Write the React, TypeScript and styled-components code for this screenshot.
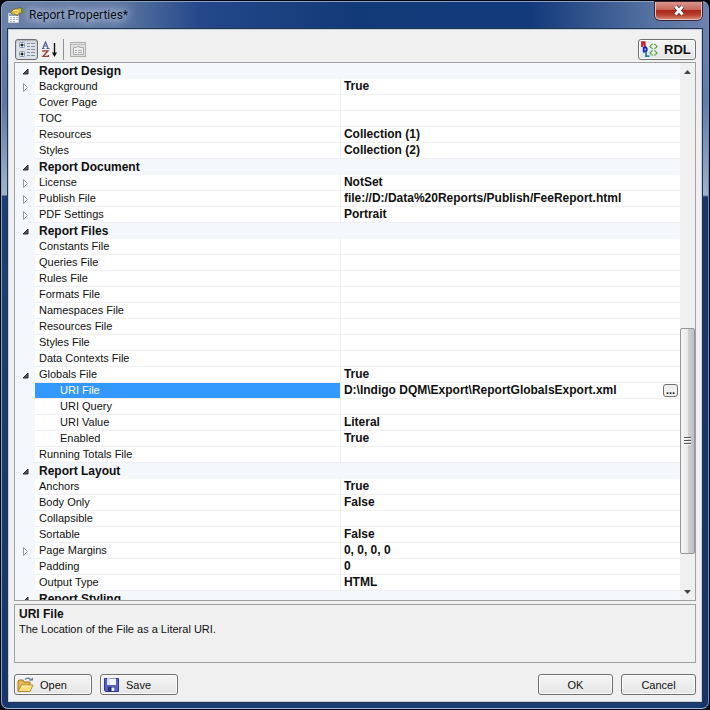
import React from "react";
import styled, { createGlobalStyle, css } from "styled-components";

const Global = createGlobalStyle`
  *, *::before, *::after { box-sizing: border-box; }
  html, body, #root { height: 100%; }
  body {
    margin: 0;
    background: #05070f;
    color: #101010;
    font: 11px/16px "Liberation Sans", Arial, sans-serif;
    overflow: hidden;
  }
  #root {
    display: flex;
    padding: 1px;
  }
`;

const Window = styled.main`
  flex: 1;
  min-width: 0;
  display: flex;
  flex-direction: column;
  padding: 0 6px 6px;
  border: 1px solid #9fb6d6;
  border-color: #8ba0c0 #6d8ab4 #a4b8d4 #8ba0c0;
  border-radius: 7px;
  background:
    linear-gradient(90deg, #6b80a6, #5f78a2 16%, #24488a 28%, #133a78 50%, #133a7b 75%, #5572a0 92%, #6b83ad) top / 100% 28px no-repeat,
    linear-gradient(#6b80a6, #5c77a4 100px, #a5b4cb 193px, #1d3f75 194px, #17376c) left / 7px 100% no-repeat,
    linear-gradient(#6b83ad, #5f7cab 100px, #a0b2cc 193px, #17376c 195px, #14346a) right / 7px 100% no-repeat,
    #1a3d74;
`;

const TitleBar = styled.header`
  flex: none;
  height: 27px;
  display: flex;
  align-items: flex-start;
  gap: 5px;
`;

const TitleIcon = styled.svg`
  width: 16px;
  height: 16px;
  margin-top: 5px;
`;

const Title = styled.h1`
  flex: 1;
  margin: 3px 0 0;
  font: 12px/20px Roboto, "Open Sans", sans-serif;
  color: #0a0f18;
  text-shadow: 0 0 8px #b9c7dd, 0 0 8px #b9c7dd, 0 0 12px #b9c7dd;
`;

const CloseButton = styled.button`
  width: 47px;
  height: 18px;
  display: flex;
  align-items: center;
  justify-content: center;
  padding: 0;
  border: 1px solid #e3c1c0;
  border-top: 0;
  border-radius: 0 0 5px 5px;
  background: linear-gradient(#d9968c, #c7675a 45%, #ac2a1b 50%, #b63f2c 75%, #d5836c);
  box-shadow: 0 0 0 1px #3f2434;
`;

const Client = styled.div`
  flex: 1;
  min-height: 0;
  display: flex;
  flex-direction: column;
  padding: 7px 5px 6px;
  border: 1px solid #c3d0e2;
  outline: 1px solid #24354f;
  background: #f0f0f0;
`;

const Toolbar = styled.div`
  flex: none;
  height: 25px;
  display: flex;
  align-items: center;
  padding-left: 1px;
`;

const ToolButton = styled.button<{ $pressed?: boolean }>`
  width: 23px;
  height: 21px;
  display: flex;
  align-items: center;
  justify-content: center;
  padding: 0;
  border: 1px solid transparent;
  border-radius: 3px;
  background: none;
  ${(p) =>
    p.$pressed &&
    css`
      border-color: #6b6f75;
      background: #dfe3e8;
      box-shadow: inset 0 1px 2px #a9adb3;
    `}
`;

const Divider = styled.span`
  width: 1px;
  height: 21px;
  margin: 0 3px 0 2px;
  background: #909090;
`;

const Push = styled.span`
  flex: 1;
`;

const Button = styled.button<{ $width: number; $left?: boolean; $strong?: boolean }>`
  width: ${(p) => p.$width}px;
  height: 21px;
  display: flex;
  align-items: center;
  justify-content: ${(p) => (p.$left ? "flex-start" : "center")};
  gap: 6px;
  padding: 0 2px;
  border: 1px solid #707070;
  border-radius: 3px;
  background: linear-gradient(#f4f4f4, #ededed 50%, #e6e6e6);
  box-shadow: inset 0 0 0 1px #fbfbfb;
  color: #101010;
  font: ${(p) => (p.$strong ? "bold 13px" : "11px")} / 16px "Liberation Sans", Arial, sans-serif;
`;

const GridPanel = styled.section`
  flex: 1;
  min-height: 0;
  display: flex;
  border: 1px solid #a0a0a0;
  background: #fff;
  overflow: hidden;
`;

const GridView = styled.div`
  flex: 1;
  min-width: 0;
  overflow: hidden;
`;

const Table = styled.table`
  width: 100%;
  table-layout: fixed;
  border-spacing: 0;
  font-size: 11px;
`;

const GutterCol = styled.col`
  width: 20px;
`;

const NameCol = styled.col`
  width: 46%;
`;

const Gutter = styled.td`
  height: 16px;
  padding: 0 0 0 5px;
  background: #f4f7fc;
  line-height: 0;
`;

const CategoryName = styled.th`
  height: 16px;
  padding: 0 0 0 4px;
  background: #f4f7fc;
  text-align: left;
  font: bold 12px/15px "Liberation Sans", Arial, sans-serif;
`;

const Name = styled.th<{ $nested?: boolean; $selected?: boolean }>`
  height: 16px;
  padding: 0 0 0 ${(p) => (p.$nested ? 25 : 4)}px;
  border: solid #f0f0f2;
  border-width: 0 1px 1px 0;
  background: ${(p) => (p.$selected ? "#3399ff" : "#fff")};
  background-clip: padding-box;
  color: ${(p) => (p.$selected ? "#fff" : "#101010")};
  text-align: left;
  font: 11px/15px "Liberation Sans", Arial, sans-serif;
`;

const Value = styled.td`
  height: 16px;
  padding: 0 0 0 3px;
  border-bottom: 1px solid #f0f0f2;
  font: bold 12px/15px "Liberation Sans", Arial, sans-serif;
  white-space: nowrap;
`;

const ValueLine = styled.div`
  height: 15px;
  display: flex;
  align-items: center;
  justify-content: space-between;
  padding-right: 2px;
`;

const MoreButton = styled.button`
  width: 15px;
  height: 13px;
  padding: 0;
  border: 1px solid #707070;
  border-radius: 3px;
  background: #f0f0f0;
  color: #101010;
  font: bold 11px/11px "Liberation Sans", Arial, sans-serif;
`;

const ScrollBar = styled.div`
  flex: none;
  width: 15px;
  display: flex;
  flex-direction: column;
  background: #f0f0f0;
`;

const ScrollArrow = styled.button`
  height: 17px;
  display: flex;
  align-items: center;
  justify-content: center;
  padding: 0;
  border: 0;
  background: none;
`;

const Track = styled.div`
  flex: 1;
  display: flex;
  flex-direction: column;
`;

const TrackSpace = styled.span<{ $grow: number }>`
  flex: ${(p) => p.$grow} 1 0;
`;

const Thumb = styled.div`
  flex: 226 1 0;
  display: flex;
  align-items: center;
  justify-content: center;
  border: 1px solid #959595;
  border-radius: 2px;
  background: linear-gradient(90deg, #f5f5f5, #e9e9eb 50%, #d0d0d4 55%, #bebec3);
`;

const HelpPanel = styled.section`
  flex: none;
  height: 59px;
  margin-top: 3px;
  padding: 1px 4px;
  border: 1px solid #a0a0a0;
`;

const HelpTitle = styled.h2`
  margin: 0;
  font: bold 12px/16px "Liberation Sans", Arial, sans-serif;
`;

const HelpText = styled.p`
  margin: 0;
  font-size: 11px;
  line-height: 15px;
`;

const Footer = styled.footer`
  flex: none;
  display: flex;
  gap: 8px;
  margin-top: 11px;
`;

type Row = {
  name: string;
  value?: string;
  kind?: "category" | "nested";
  mark?: "open" | "closed";
  selected?: boolean;
};

const rows: Row[] = [
  { name: "Report Design", kind: "category", mark: "open" },
  { name: "Background", value: "True", mark: "closed" },
  { name: "Cover Page" },
  { name: "TOC" },
  { name: "Resources", value: "Collection (1)" },
  { name: "Styles", value: "Collection (2)" },
  { name: "Report Document", kind: "category", mark: "open" },
  { name: "License", value: "NotSet", mark: "closed" },
  { name: "Publish File", value: "file://D:/Data%20Reports/Publish/FeeReport.html", mark: "closed" },
  { name: "PDF Settings", value: "Portrait", mark: "closed" },
  { name: "Report Files", kind: "category", mark: "open" },
  { name: "Constants File" },
  { name: "Queries File" },
  { name: "Rules File" },
  { name: "Formats File" },
  { name: "Namespaces File" },
  { name: "Resources File" },
  { name: "Styles File" },
  { name: "Data Contexts File" },
  { name: "Globals File", value: "True", mark: "open" },
  { name: "URI File", value: "D:\\Indigo DQM\\Export\\ReportGlobalsExport.xml", kind: "nested", selected: true },
  { name: "URI Query", kind: "nested" },
  { name: "URI Value", value: "Literal", kind: "nested" },
  { name: "Enabled", value: "True", kind: "nested" },
  { name: "Running Totals File" },
  { name: "Report Layout", kind: "category", mark: "open" },
  { name: "Anchors", value: "True" },
  { name: "Body Only", value: "False" },
  { name: "Collapsible" },
  { name: "Sortable", value: "False" },
  { name: "Page Margins", value: "0, 0, 0, 0", mark: "closed" },
  { name: "Padding", value: "0" },
  { name: "Output Type", value: "HTML" },
  { name: "Report Styling", kind: "category", mark: "open" },
];

const Marker = ({ mark }: { mark?: Row["mark"] }) =>
  mark ? (
    <svg width="11" height="11" viewBox="0 0 11 11" aria-hidden="true">
      {mark === "open" ? (
        <path d="M8 3V8H3Z" fill="#5a5a5a" stroke="#2a2a2a" strokeWidth="1" strokeLinejoin="round" />
      ) : (
        <path d="M3.500 1.500V9.500L7.500 5.500Z" fill="#fff" stroke="#999" />
      )}
    </svg>
  ) : null;

const PropertyRow = ({ row }: { row: Row }) => (
  <tr>
    <Gutter>
      <Marker mark={row.mark} />
    </Gutter>
    {row.kind === "category" ? (
      <CategoryName colSpan={2} scope="rowgroup">
        {row.name}
      </CategoryName>
    ) : (
      <>
        <Name scope="row" $nested={row.kind === "nested"} $selected={row.selected}>
          {row.name}
        </Name>
        <Value>
          <ValueLine>
            {row.value}
            {row.selected && <MoreButton aria-label="Browse">...</MoreButton>}
          </ValueLine>
        </Value>
      </>
    )}
  </tr>
);

const PropertiesIcon = () => (
  <TitleIcon viewBox="0 0 16 16" aria-hidden="true">
    <path d="M.5 6.500h10v9H.5z" fill="#f8f9fb" stroke="#c9d0da" />
    <path d="M1 7h9v2H1z" fill="#8fa6cc" />
    <path d="M2 10.500h2M5 10.500h2M8 10.500h2M2 12.500h2M5 12.500h2M8 12.500h2M2 14.500h2M5 14.500h2" stroke="#a9b2c4" />
    <path d="M2.500 5.500l3-3.500h3l2-1h3v5l-3 1-1 2-2-2-2 1z" fill="#dcb53a" stroke="#6f5a20" strokeWidth=".8" />
    <path d="M5 4l3-1 3 1M7 6h3" stroke="#fff3a8" fill="none" />
    <path d="M13 1h3v5h-3z" fill="#5d8a4c" />
  </TitleIcon>
);

const CategorizedIcon = () => (
  <svg width="18" height="17" viewBox="0 0 18 17" aria-hidden="true">
    <rect x="1.500" y="1.500" width="5" height="5" rx="1" fill="#fff" stroke="#7897bd" />
    <rect x="1.500" y="10.500" width="5" height="5" rx="1" fill="#fff" stroke="#7897bd" />
    <path d="M2.500 4h3M4 2.500v3M2.500 13h3M4 11.500v3" stroke="#111" strokeWidth="1.300" />
    <path d="M9 2.500h3M13 2.500h4M9 5.500h3M13 5.500h4M9 8.500h3M13 8.500h4M9 11.500h3M13 11.500h4M9 14.500h3M13 14.500h4" stroke="#7e90a8" />
  </svg>
);

const SortIcon = () => (
  <svg width="17" height="17" viewBox="0 0 17 17" aria-hidden="true">
    <path d="M2 7L4.500 1 7 7M3 5h3M1 7.500h2.500M5.500 7.500h3" fill="none" stroke="#4b5ba8" strokeWidth="1.200" />
    <path d="M2 11v-1.200h5L2 15.300h5.500V14" fill="none" stroke="#a1383b" strokeWidth="1.300" />
    <path d="M13.500 2v11" stroke="#111" strokeWidth="1.400" />
    <path d="M11 11.500h5l-2.500 4.500z" fill="#111" />
  </svg>
);

const PagesIcon = () => (
  <svg width="17" height="16" viewBox="0 0 17 16" aria-hidden="true">
    <rect x=".5" y=".5" width="15" height="14" fill="#e1e1e1" stroke="#adadad" />
    <path d="M1 2.500h14" stroke="#bcbcbc" />
    <path d="M3.500 5.500h3l1-1h2v1h4v7h-10z" fill="#f1f1f1" stroke="#a8a8a8" />
    <path d="M5 8.500h2M8 8.500h4M5 10.500h2M8 10.500h4" stroke="#aaa" />
  </svg>
);

const RdlIcon = () => (
  <svg width="17" height="17" viewBox="0 0 17 17" aria-hidden="true">
    <path d="M1 6V1.200h2.700v2H1.500M2.800 3.500L4.800 6" fill="none" stroke="#c81724" strokeWidth="1.700" />
    <path d="M2.700 6.500H4q1.800 0 1.800 2t-1.800 2H2.700z" fill="none" stroke="#1820bd" strokeWidth="1.800" />
    <path d="M5 10.500v4.700h3.500" fill="none" stroke="#188c96" strokeWidth="1.800" />
    <path d="M11.500 3L9 5.500 11.500 8M13.500 3L16 5.500 13.500 8M11.500 9.500L9 12l2.500 2.500M13.500 9.500L16 12l-2.500 2.500" fill="none" stroke="#3f9a2e" strokeWidth="1.200" strokeDasharray="1.600 .4" />
  </svg>
);

const FolderIcon = () => (
  <svg width="17" height="16" viewBox="0 0 17 16" aria-hidden="true">
    <path d="M1 14V4l1-1h4l1 2h6v3" fill="#e6b84b" stroke="#a3792a" />
    <path d="M1 14.500L4.500 8H16l-3 6.500z" fill="#ffdf80" stroke="#b48a34" />
    <path d="M4.500 9h9" stroke="#fff0b5" />
    <path d="M8 2.500q4-3 6 1" fill="none" stroke="#637c9c" strokeWidth="1.300" />
    <path d="M12 3.500h4V.5z" fill="#637c9c" />
  </svg>
);

const DiskIcon = () => (
  <svg width="17" height="16" viewBox="0 0 17 16" aria-hidden="true">
    <path d="M1.500 1.500h14v13h-13l-1-1z" fill="#5561c5" stroke="#303a91" />
    <path d="M4 1.500h9V8H4z" fill="#f5f7ff" />
    <path d="M4 1.500h3V8H4z" fill="#dbe3fa" />
    <path d="M5 10h7v4.500H5z" fill="#26306f" />
    <path d="M8.500 10.500h3v3.500h-3z" fill="#edf0fc" />
  </svg>
);

export default function App() {
  return (
    <>
      <Global />
      <Window>
        <TitleBar>
          <PropertiesIcon />
          <Title>Report Properties*</Title>
          <CloseButton aria-label="Close">
            <svg width="14" height="11" viewBox="0 0 14 11" aria-hidden="true">
              <path d="M3.500 1.500l7 8M10.500 1.500l-7 8" stroke="#643039" strokeWidth="4.600" />
              <path d="M3.500 1.500l7 8M10.500 1.500l-7 8" stroke="#fff" strokeWidth="2.800" />
            </svg>
          </CloseButton>
        </TitleBar>
        <Client>
          <Toolbar>
            <ToolButton $pressed aria-label="Categorized" aria-pressed="true">
              <CategorizedIcon />
            </ToolButton>
            <ToolButton aria-label="Alphabetical">
              <SortIcon />
            </ToolButton>
            <Divider />
            <ToolButton aria-label="Property Pages" disabled>
              <PagesIcon />
            </ToolButton>
            <Push />
            <Button $width={58} $left $strong>
              <RdlIcon />
              RDL
            </Button>
          </Toolbar>
          <GridPanel>
            <GridView>
              <Table>
                <colgroup>
                  <GutterCol />
                  <NameCol />
                  <col />
                </colgroup>
                <tbody>
                  {rows.map((row) => (
                    <PropertyRow key={row.name} row={row} />
                  ))}
                </tbody>
              </Table>
            </GridView>
            <ScrollBar>
              <ScrollArrow aria-label="Scroll up">
                <svg width="7" height="4" aria-hidden="true">
                  <path d="M0 4L3.500 0 7 4z" fill="#444" />
                </svg>
              </ScrollArrow>
              <Track>
                <TrackSpace $grow={249} />
                <Thumb>
                  <svg width="7" height="8" aria-hidden="true">
                    <path d="M0 .5h7M0 3.500h7M0 6.500h7" stroke="#555" />
                    <path d="M0 1.500h7M0 4.500h7M0 7.500h7" stroke="#fff" />
                  </svg>
                </Thumb>
                <TrackSpace $grow={29} />
              </Track>
              <ScrollArrow aria-label="Scroll down">
                <svg width="7" height="4" aria-hidden="true">
                  <path d="M0 0L3.500 4 7 0z" fill="#444" />
                </svg>
              </ScrollArrow>
            </ScrollBar>
          </GridPanel>
          <HelpPanel>
            <HelpTitle>URI File</HelpTitle>
            <HelpText>The Location of the File as a Literal URI.</HelpText>
          </HelpPanel>
          <Footer>
            <Button $width={78} $left>
              <FolderIcon />
              Open
            </Button>
            <Button $width={78} $left>
              <DiskIcon />
              Save
            </Button>
            <Push />
            <Button $width={75}>OK</Button>
            <Button $width={75}>Cancel</Button>
          </Footer>
        </Client>
      </Window>
    </>
  );
}
